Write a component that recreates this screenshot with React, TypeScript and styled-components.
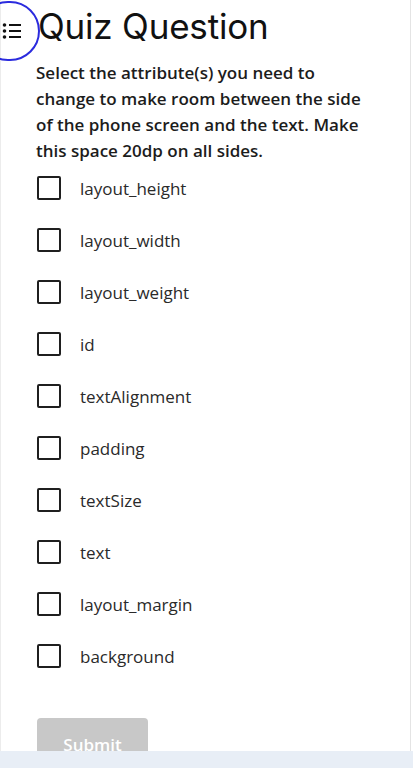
import React, { useState } from 'react';
import styled, { createGlobalStyle } from 'styled-components';

const GlobalStyle = createGlobalStyle`
  html, body {
    margin: 0;
    padding: 0;
    background: #ffffff;
  }
  body {
    font-family: 'Open Sans', 'Liberation Sans', sans-serif;
    color: #1f1f1f;
  }
`;

const Page = styled.div`
  width: 411px;
  min-height: 768px;
  box-sizing: border-box;
  border-left: 1px solid #ececec;
  border-right: 1px solid #e4e4e4;
  padding: 0 38px 0 35px;
  background: #fff;
`;

const MenuButton = styled.button`
  position: fixed;
  top: 1px;
  left: -22px;
  width: 62px;
  height: 60px;
  border: 2px solid #2b2bde;
  border-radius: 30px;
  background: transparent;
  padding: 0 0 0 22px;
  display: flex;
  align-items: center;
  justify-content: flex-start;
  color: #111;
  cursor: pointer;
`;

const Title = styled.h1`
  margin: 0;
  padding-top: 5px;
  padding-left: 2px;
  font-family: 'Inter', 'Liberation Sans', sans-serif;
  font-weight: 400;
  font-size: 35px;
  line-height: 42px;
  letter-spacing: -0.2px;
  color: #111;
`;

const Prompt = styled.p`
  margin: 13px 0 12px;
  font-size: 17px;
  line-height: 26px;
  font-weight: 600;
  color: #1c1c1c;
`;

const Options = styled.ul`
  list-style: none;
  margin: 0;
  padding: 0;
  display: flex;
  flex-direction: column;
  gap: 28px;
`;

const Option = styled.li`
  display: flex;
  align-items: center;
  gap: 19px;
  height: 24px;
  cursor: pointer;
`;

const Box = styled.span<{ $checked: boolean }>`
  width: 24px;
  height: 24px;
  box-sizing: border-box;
  border: 2px solid #1f1f1f;
  border-radius: 2px;
  margin-left: 1px;
  background: ${(p) => (p.$checked ? '#1f1f1f' : '#fff')};
  flex: none;
`;

const Label = styled.span`
  font-size: 17px;
  color: #2a2a2a;
`;

const SubmitButton = styled.button`
  margin-top: 50px;
  margin-left: 1px;
  width: 111px;
  height: 50px;
  border: none;
  border-radius: 4px;
  background: #c8c8c8;
  color: #fff;
  font-family: 'Open Sans', 'Liberation Sans', sans-serif;
  font-size: 17px;
  font-weight: 600;
  padding-top: 4px;
`;

const BottomBar = styled.div`
  position: fixed;
  left: 0;
  right: 0;
  bottom: 0;
  height: 17px;
  background: #e8eef6;
`;

const ListIcon = () => (
  <svg width="20" height="20" viewBox="0 0 20 20" fill="none">
    <circle cx="2.5" cy="4" r="1.8" fill="#111" />
    <circle cx="2.5" cy="10" r="1.8" fill="#111" />
    <circle cx="2.5" cy="16" r="1.8" fill="#111" />
    <path d="M7 4h12M7 10h12M7 16h12" stroke="#111" strokeWidth="2" />
  </svg>
);

const attributes = [
  'layout_height',
  'layout_width',
  'layout_weight',
  'id',
  'textAlignment',
  'padding',
  'textSize',
  'text',
  'layout_margin',
  'background',
];

export default function App() {
  const [picked, setPicked] = useState<string[]>([]);

  const toggle = (name: string) =>
    setPicked((cur) =>
      cur.includes(name) ? cur.filter((n) => n !== name) : [...cur, name]
    );

  return (
    <>
      <GlobalStyle />
      <Page>
        <Title>Quiz Question</Title>
        <Prompt>
          Select the attribute(s) you need to change to make room between the
          side of the phone screen and the text. Make this space 20dp on all
          sides.
        </Prompt>
        <Options>
          {attributes.map((a) => (
            <Option key={a} onClick={() => toggle(a)}>
              <Box $checked={picked.includes(a)} />
              <Label>{a}</Label>
            </Option>
          ))}
        </Options>
        <SubmitButton disabled={picked.length === 0}>Submit</SubmitButton>
      </Page>
      <MenuButton aria-label="menu">
        <ListIcon />
      </MenuButton>
      <BottomBar />
    </>
  );
}
